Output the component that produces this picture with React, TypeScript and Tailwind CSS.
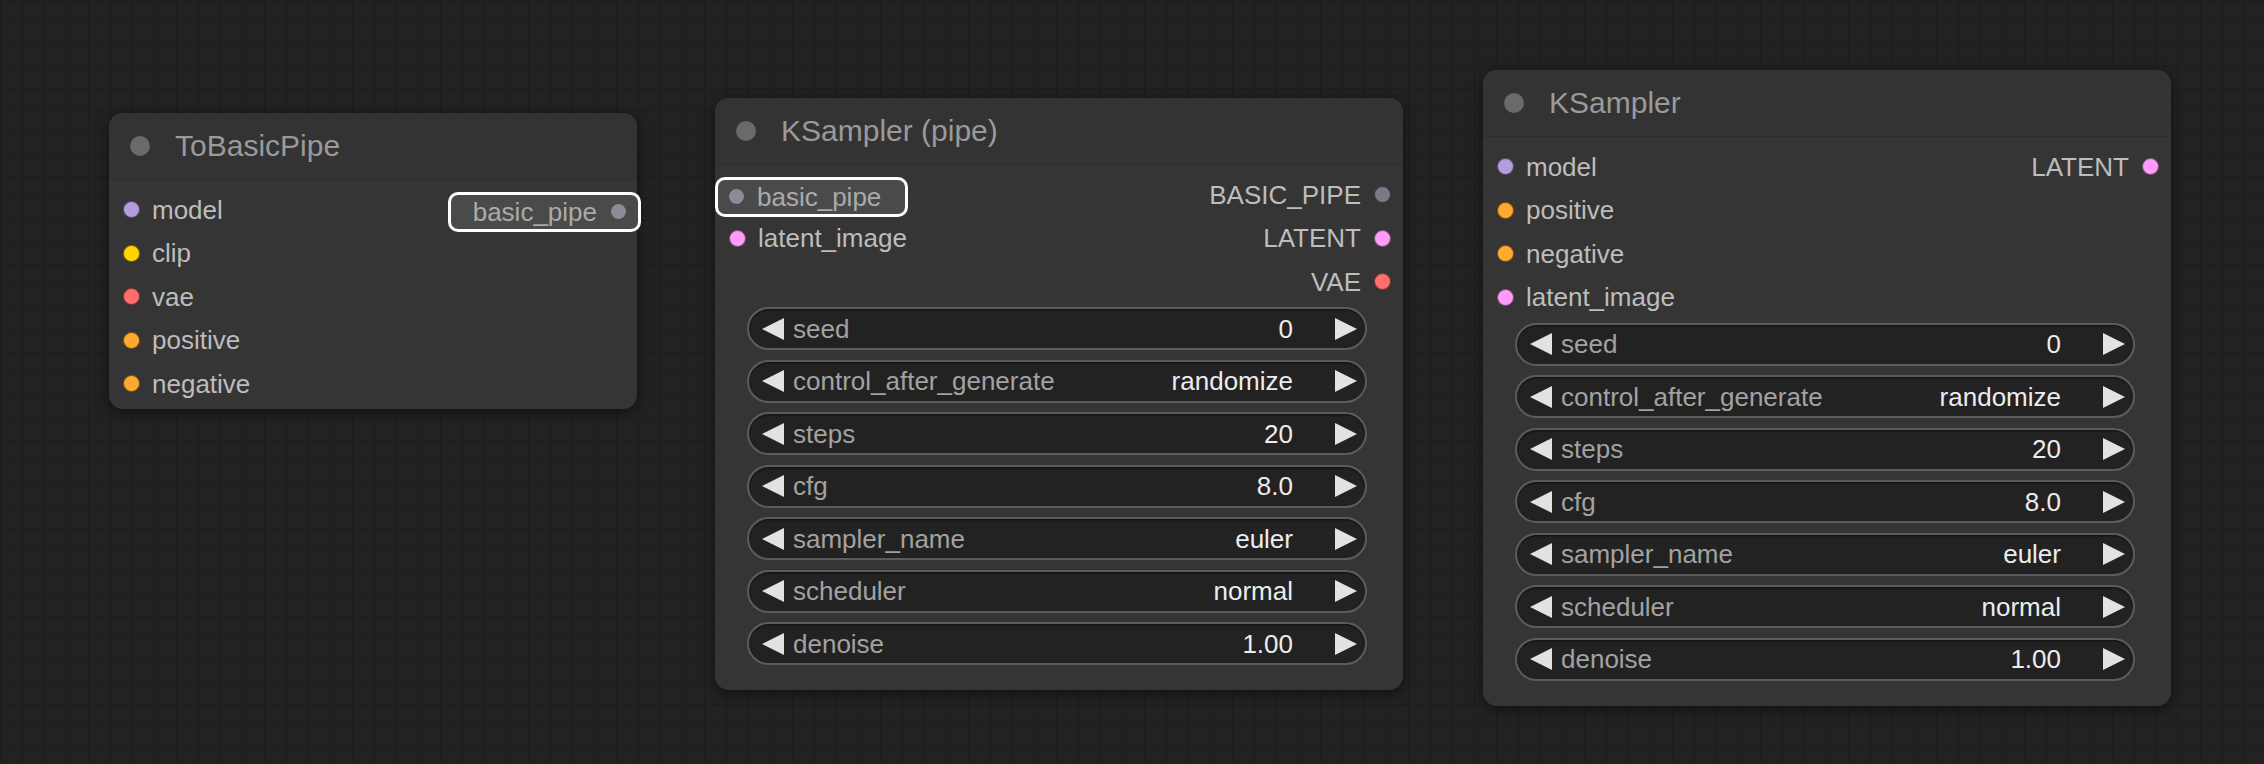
import React from "react";

type Slot = { name: string; c: string; hl?: boolean };
type Widget = { label: string; value: string };

function Dot({ c }: { c: string }) {
  return <span className={`block h-[17px] w-[17px] shrink-0 rounded-full border border-black/50 ${c}`} />;
}

function LeftArrow() {
  return (
    <svg width="22" height="22" viewBox="0 0 22 22" className="shrink-0">
      <path d="M0 11 L22 0 L22 22 Z" fill="#e2e2e2" />
    </svg>
  );
}
function RightArrow() {
  return (
    <svg width="22" height="22" viewBox="0 0 22 22" className="ml-[42px] shrink-0">
      <path d="M0 0 L22 11 L0 22 Z" fill="#e2e2e2" />
    </svg>
  );
}

function InputSlot({ s }: { s?: Slot }) {
  if (!s) return <div />;
  if (s.hl)
    return (
      <div className="-ml-[14px] mt-[4px] flex h-[40px] w-[193px] items-center gap-[12px] rounded-[10px] border-[3px] border-white bg-[#4a4a4a] pl-[10px]">
        <Dot c={s.c} />
        <span className="text-[#ababab]">{s.name}</span>
      </div>
    );
  return (
    <div className="flex items-center gap-[12px]">
      <Dot c={s.c} />
      <span className="text-[#bdbdbd]">{s.name}</span>
    </div>
  );
}

function OutputSlot({ s }: { s?: Slot }) {
  if (!s) return <div />;
  if (s.hl)
    return (
      <div className="-mr-[16px] mt-[4px] flex h-[40px] w-[193px] items-center justify-end gap-[13px] rounded-[10px] border-[3px] border-white bg-[#4a4a4a] pr-[11px]">
        <span className="text-[#ababab]">{s.name}</span>
        <Dot c={s.c} />
      </div>
    );
  return (
    <div className="flex items-center gap-[13px]">
      <span className="text-[#bdbdbd]">{s.name}</span>
      <Dot c={s.c} />
    </div>
  );
}

function WidgetRow({ w }: { w: Widget }) {
  return (
    <div className="flex h-[43px] items-center rounded-full border-2 border-[#5c5c5c] bg-[#222222] pl-[13px] pr-[8px] shadow-[inset_0_1px_2px_rgba(0,0,0,0.6)]">
      <LeftArrow />
      <span className="ml-[9px] flex-1 text-[#a2a2a2]">{w.label}</span>
      <span className="text-[#ececec]">{w.value}</span>
      <RightArrow />
    </div>
  );
}

function Node({
  pos,
  title,
  inputs,
  outputs,
  widgets,
}: {
  pos: string;
  title: string;
  inputs: Slot[];
  outputs: Slot[];
  widgets?: Widget[];
}) {
  const n = Math.max(inputs.length, outputs.length);
  const rows = Array.from({ length: n }, (_, i) => i);
  return (
    <div
      className={`absolute ${pos} rounded-[14px] bg-[#353535] shadow-[0_3px_14px_rgba(0,0,0,0.55)]`}
    >
      <div className="flex h-[67px] items-center gap-[25px] rounded-t-[14px] border-b border-[#2d2d2d] bg-[#333333] pl-[21px]">
        <span className="block h-[20px] w-[20px] rounded-full bg-[#6a6a6a]" />
        <span className="text-[30px] leading-none text-[#9a9a9a]">{title}</span>
      </div>
      <div className={`pt-[8px] ${widgets ? "pb-[25px]" : "pb-[3.5px]"}`}>
        {rows.map((i) => (
          <div key={i} className="flex h-[43.5px] items-center justify-between pl-[14px] pr-[12px] text-[26px] leading-none">
            <InputSlot s={inputs[i]} />
            <OutputSlot s={outputs[i]} />
          </div>
        ))}
        {widgets && (
          <div className="ml-[32px] mr-[36px] mt-[3.5px] flex flex-col gap-[9.5px] text-[26px] leading-none">
            {widgets.map((w) => (
              <WidgetRow key={w.label} w={w} />
            ))}
          </div>
        )}
      </div>
    </div>
  );
}

const ksWidgets: Widget[] = [
  { label: "seed", value: "0" },
  { label: "control_after_generate", value: "randomize" },
  { label: "steps", value: "20" },
  { label: "cfg", value: "8.0" },
  { label: "sampler_name", value: "euler" },
  { label: "scheduler", value: "normal" },
  { label: "denoise", value: "1.00" },
];

export default function App() {
  return (
    <div className="relative h-[764px] w-[2264px] overflow-hidden bg-[#222222] bg-[linear-gradient(to_right,#1c1c1c_1px,transparent_1px),linear-gradient(to_bottom,#1d1d1d_1px,transparent_1px)] bg-[size:22px_22px] font-['Liberation_Sans',Arial,sans-serif]">
      <Node
        pos="left-[109px] top-[113px] w-[528px]"
        title="ToBasicPipe"
        inputs={[
          { name: "model", c: "bg-[#b39ddb]" },
          { name: "clip", c: "bg-[#ffd500]" },
          { name: "vae", c: "bg-[#ff6e6e]" },
          { name: "positive", c: "bg-[#ffa931]" },
          { name: "negative", c: "bg-[#ffa931]" },
        ]}
        outputs={[{ name: "basic_pipe", c: "bg-[#8c8c98]", hl: true }]}
      />
      <Node
        pos="left-[715px] top-[98px] w-[688px]"
        title="KSampler (pipe)"
        inputs={[
          { name: "basic_pipe", c: "bg-[#8c8c98]", hl: true },
          { name: "latent_image", c: "bg-[#ff9cf9]" },
        ]}
        outputs={[
          { name: "BASIC_PIPE", c: "bg-[#7a7a86]" },
          { name: "LATENT", c: "bg-[#ff9cf9]" },
          { name: "VAE", c: "bg-[#ff6e6e]" },
        ]}
        widgets={ksWidgets}
      />
      <Node
        pos="left-[1483px] top-[70px] w-[688px]"
        title="KSampler"
        inputs={[
          { name: "model", c: "bg-[#b39ddb]" },
          { name: "positive", c: "bg-[#ffa931]" },
          { name: "negative", c: "bg-[#ffa931]" },
          { name: "latent_image", c: "bg-[#ff9cf9]" },
        ]}
        outputs={[{ name: "LATENT", c: "bg-[#ff9cf9]" }]}
        widgets={ksWidgets}
      />
    </div>
  );
}
